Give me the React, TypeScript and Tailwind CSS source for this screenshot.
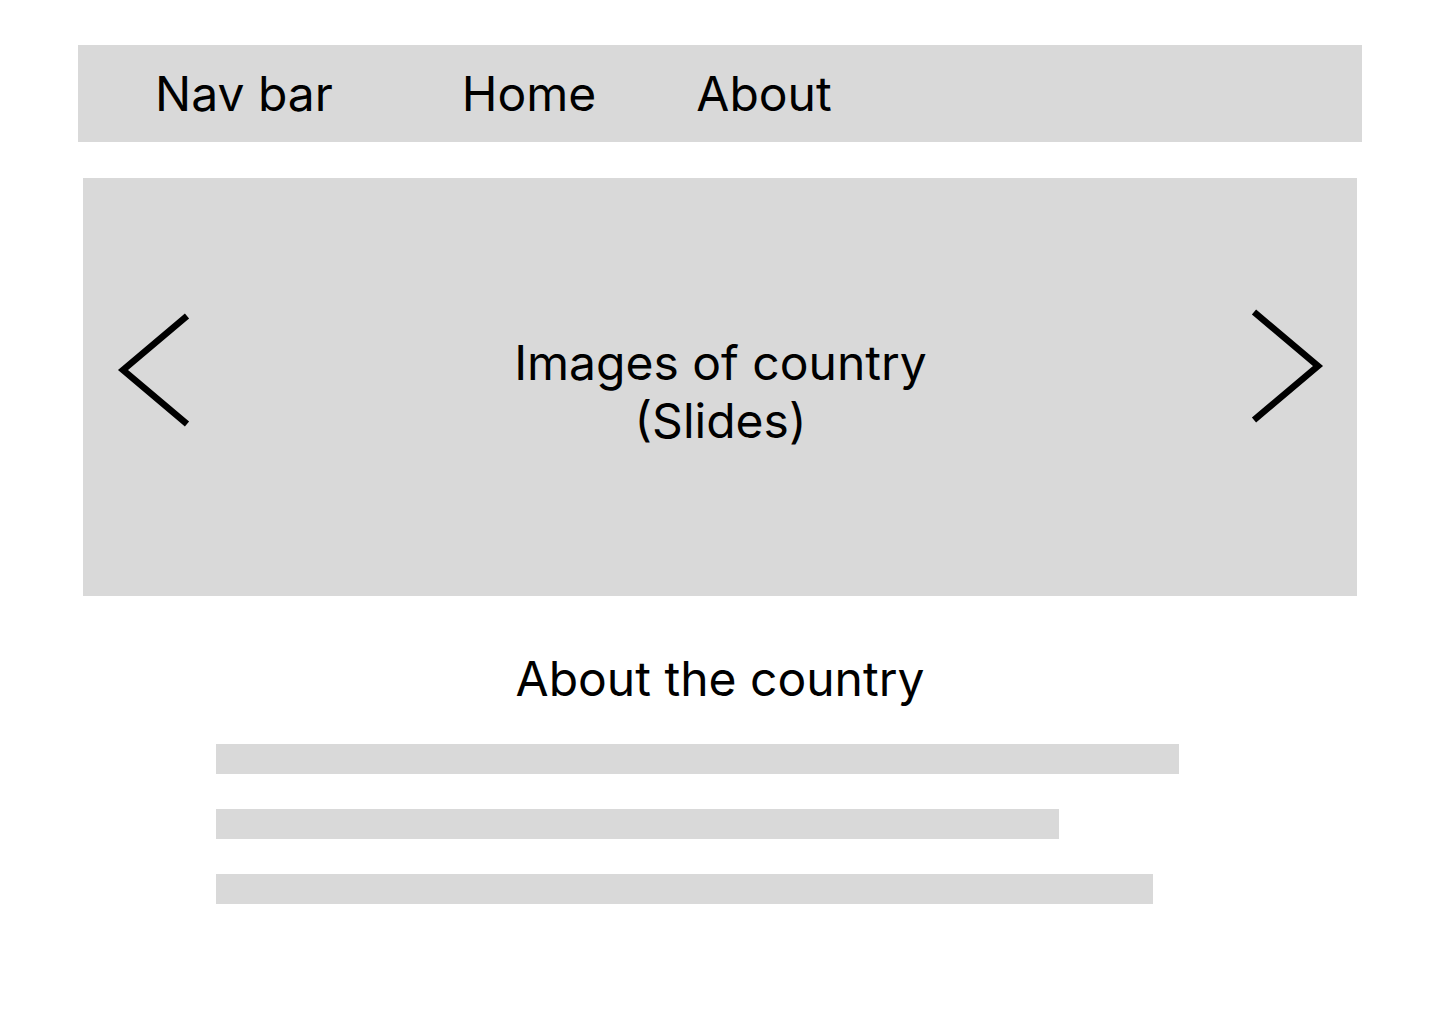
import React from 'react';

const Chevron = ({ dir }: { dir: 'left' | 'right' }) => (
  <svg width="76" height="116" viewBox="0 0 76 116" fill="none" className="shrink-0">
    {dir === 'left' ? (
      <polyline points="70,4 6,58 70,112" stroke="#000" strokeWidth="6.5" strokeLinejoin="miter" />
    ) : (
      <polyline points="6,4 70,58 6,112" stroke="#000" strokeWidth="6.5" strokeLinejoin="miter" />
    )}
  </svg>
);

const bars = ['w-[963px]', 'w-[843px]', 'w-[937px]'];

export default function App() {
  return (
    <div className="min-h-screen bg-white pt-[45px] font-['Inter','Liberation_Sans',sans-serif] text-black">
      {/* nav */}
      <div className="mx-[78px] flex h-[97px] items-center bg-[#d9d9d9] pl-[77px] text-[48px] leading-[58px]">
        <span>Nav bar</span>
        <span className="ml-[129px]">Home</span>
        <span className="ml-[100px]">About</span>
      </div>

      {/* slides */}
      <div className="mx-[83px] mt-[36px] flex h-[418px] items-start bg-[#d9d9d9]">
        <div className="ml-[34px] mt-[134px]">
          <Chevron dir="left" />
        </div>
        <div className="mt-[156px] flex-1 text-center text-[48px] leading-[58px]">
          Images of country
          <br />
          (Slides)
        </div>
        <div className="mr-[33px] mt-[130px]">
          <Chevron dir="right" />
        </div>
      </div>

      {/* about */}
      <h2 className="mt-[54px] text-center text-[48px] leading-[58px] font-normal">About the country</h2>
      <div className="ml-[216px] mt-[36px] flex flex-col gap-[35px]">
        {bars.map((w) => (
          <div key={w} className={`${w} h-[30px] bg-[#d9d9d9]`} />
        ))}
      </div>
    </div>
  );
}
